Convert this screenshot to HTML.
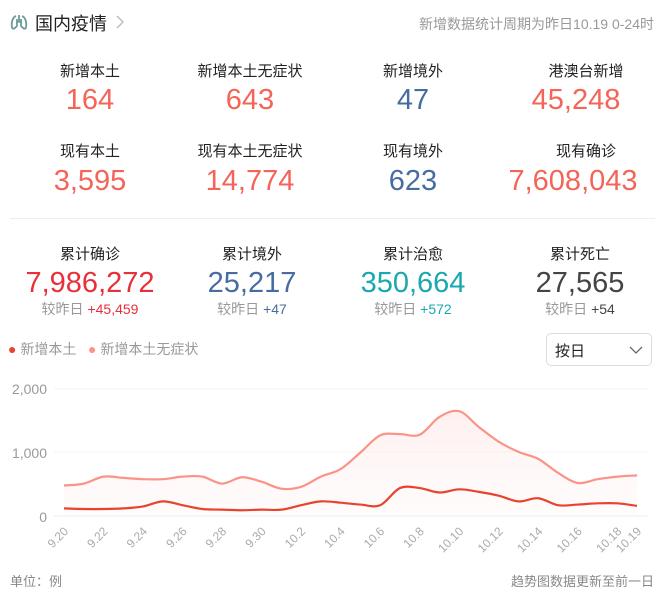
<!DOCTYPE html>
<html><head><meta charset="utf-8"><style>
body{margin:0;width:668px;height:600px;background:#fff;font-family:"Liberation Sans","Noto Sans CJK SC",sans-serif;position:relative;overflow:hidden}
.a{position:absolute;white-space:nowrap}
.c{transform:translateX(-50%);text-align:center}
.l{font-size:15px;color:#222}
.n{font-size:29px;line-height:30px}
.s{font-size:14px;color:#999}
</style></head><body>
<svg class="a" style="left:10px;top:13px" width="18" height="18" viewBox="0 0 18 18" fill="none" stroke="#6b9c98" stroke-width="1.8"><path d="M9 2v6M9 8c-1 1-2 2-3 2M9 8c1 1 2 2 3 2M6 3C3 4 1 9 2 14c0 2 2 2 3 1l2-2V6M12 3c3 1 5 6 4 11 0 2-2 2-3 1l-2-2V6"/></svg>
<div class="a" style="left:35px;top:10px;font-size:18px;color:#222">国内疫情</div>
<svg class="a" style="left:115px;top:14px" width="10" height="16"><path d="M2 2l6 6-6 6" stroke="#bbb" stroke-width="1.4" fill="none"/></svg>
<div class="a" style="right:14px;top:14px;font-size:14px;color:#999">新增数据统计周期为昨日10.19 0-24时</div>

<div class="a c l" style="left:90px;top:60px">新增本土</div>
<div class="a c n" style="left:90px;top:85px;color:#f46458">164</div>
<div class="a c l" style="left:250px;top:60px">新增本土无症状</div>
<div class="a c n" style="left:250px;top:85px;color:#f46458">643</div>
<div class="a c l" style="left:413px;top:60px">新增境外</div>
<div class="a c n" style="left:413px;top:85px;color:#476da0">47</div>
<div class="a c l" style="left:586px;top:60px">港澳台新增</div>
<div class="a c n" style="left:576px;top:85px;color:#f46458">45,248</div>

<div class="a c l" style="left:90px;top:140px">现有本土</div>
<div class="a c n" style="left:90px;top:166px;color:#f46458">3,595</div>
<div class="a c l" style="left:250px;top:140px">现有本土无症状</div>
<div class="a c n" style="left:250px;top:166px;color:#f46458">14,774</div>
<div class="a c l" style="left:413px;top:140px">现有境外</div>
<div class="a c n" style="left:413px;top:166px;color:#476da0">623</div>
<div class="a c l" style="left:586px;top:140px">现有确诊</div>
<div class="a c n" style="left:573px;top:166px;color:#f46458">7,608,043</div>

<div class="a" style="left:10px;top:218px;width:645px;height:1px;background:#eee"></div>

<div class="a c l" style="left:90px;top:243px">累计确诊</div>
<div class="a c n" style="left:90px;top:268px;color:#e8303b">7,986,272</div>
<div class="a c s" style="left:90px;top:299px">较昨日 <span style="color:#e8303b">+45,459</span></div>
<div class="a c l" style="left:252px;top:243px">累计境外</div>
<div class="a c n" style="left:252px;top:268px;color:#476da0">25,217</div>
<div class="a c s" style="left:252px;top:299px">较昨日 <span style="color:#476da0">+47</span></div>
<div class="a c l" style="left:413px;top:243px">累计治愈</div>
<div class="a c n" style="left:413px;top:268px;color:#1aa8b0">350,664</div>
<div class="a c s" style="left:413px;top:299px">较昨日 <span style="color:#1aa8b0">+572</span></div>
<div class="a c l" style="left:580px;top:243px">累计死亡</div>
<div class="a c n" style="left:580px;top:268px;color:#444">27,565</div>
<div class="a c s" style="left:580px;top:299px">较昨日 <span style="color:#444">+54</span></div>

<div class="a" style="left:8px;top:339px;font-size:14px;color:#999"><span style="color:#e8432e">●</span> 新增本土 &nbsp; <span style="color:#fb9387">●</span> 新增本土无症状</div>
<div class="a" style="left:546px;top:333px;width:106px;height:33px;border:1px solid #ddd;border-radius:5px;box-sizing:border-box">
<span class="a" style="left:8px;top:6px;font-size:15px;color:#222">按日</span>
<svg class="a" style="left:82px;top:11px" width="14" height="10"><path d="M1 2l6 6 6-6" stroke="#666" fill="none" stroke-width="1.3"/></svg></div>

<svg class="a" style="left:0;top:370px" width="668" height="190" id="ch">
<line x1="54" x2="648" y1="19" y2="19" stroke="#f3f3f3"/>
<line x1="54" x2="648" y1="82" y2="82" stroke="#f3f3f3"/>
<line x1="54" x2="648" y1="146" y2="146" stroke="#eee"/>
<g font-size="14" fill="#999" text-anchor="end" font-family="Liberation Sans"><text x="47" y="24">2,000</text><text x="47" y="88">1,000</text><text x="47" y="152">0</text></g>
</svg>
<div class="a" style="left:10px;top:571px;font-size:13px;color:#888">单位：例</div>
<div class="a" style="right:14px;top:571px;font-size:13px;color:#888">趋势图数据更新至前一日</div>
<script>
var L=[480,510,620,600,580,580,620,620,510,610,540,430,460,620,740,1000,1270,1290,1280,1560,1650,1400,1170,1010,900,680,520,580,620,640];
var D=[120,110,110,120,150,230,170,110,100,90,100,100,170,230,210,180,170,440,440,370,420,380,320,230,280,170,180,200,200,160];
function X(i){return 64+i*19.76}function Y(v){return 146-v*0.0635}
function path(a){var p=a.map(function(v,i){return[X(i),Y(v)]});var d="M"+p[0][0]+","+p[0][1];
for(var i=0;i<p.length-1;i++){var p0=p[i-1]||p[i],p1=p[i],p2=p[i+1],p3=p[i+2]||p2;
d+="C"+(p1[0]+(p2[0]-p0[0])/6)+","+(p1[1]+(p2[1]-p0[1])/6)+" "+(p2[0]-(p3[0]-p1[0])/6)+","+(p2[1]-(p3[1]-p1[1])/6)+" "+p2[0]+","+p2[1];}return d}
var s=document.getElementById('ch'),h="";
var lp=path(L);
h+='<defs><linearGradient id="g" x1="0" y1="0" x2="0" y2="1"><stop offset="0" stop-color="#fdd" stop-opacity=".45"/><stop offset="1" stop-color="#fee" stop-opacity=".2"/></linearGradient></defs>';
h+='<path d="'+lp+'L'+X(29)+',146L64,146Z" fill="url(#g)"/>';
h+='<path d="'+lp+'" stroke="#fb9387" stroke-width="2.2" fill="none"/>';
h+='<path d="'+path(D)+'" stroke="#e8432e" stroke-width="2.2" fill="none"/>';
var lab=["9.20","9.22","9.24","9.26","9.28","9.30","10.2","10.4","10.6","10.8","10.10","10.12","10.14","10.16","10.18"];
function t(x,s){return '<text x="'+x+'" y="162" transform="rotate(-45 '+x+' 162)" text-anchor="end" font-size="12" fill="#aaa" font-family="Liberation Sans">'+s+'</text>'}
lab.forEach(function(s,k){h+=t(X(k*2)+5,s)});
h+=t(X(29)+5,"10.19");
s.innerHTML+=h;
</script>
</body></html>
